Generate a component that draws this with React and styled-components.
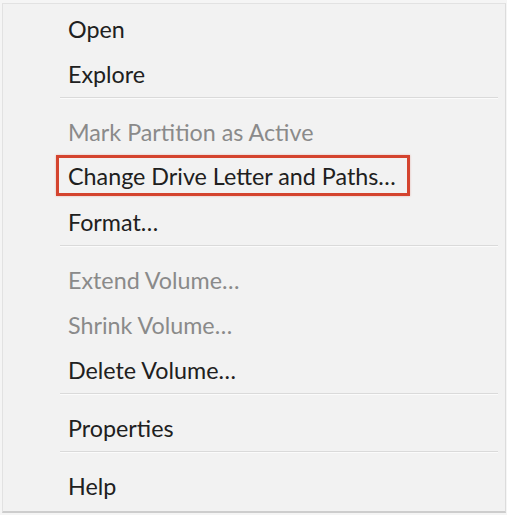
import React from "react";
import styled, { createGlobalStyle } from "styled-components";

const Global = createGlobalStyle`
  html, body { margin: 0; padding: 0; background: #f5f5f5; }
  body { font-family: Lato, "Open Sans", sans-serif; }
`;

const Menu = styled.div`
  box-sizing: border-box;
  width: 504px;
  height: 510px;
  margin: 3px 0 0 2px;
  padding: 2px 0 0 0;
  background: #f2f2f2;
  border: 1px solid #e2e2e2;
  border-bottom: 2px solid #cdcdcd;
  border-right: 1px solid #dcdcdc;
  display: flex;
  flex-direction: column;
`;

const Item = styled.div`
  height: 45px;
  flex: 0 0 45px;
  display: flex;
  align-items: center;
  padding-left: 65px;
  font-size: 23.3px;
  color: ${(p) => (p.$disabled ? "#8a8a8a" : "#202020")};
  white-space: nowrap;
`;

const Label = styled.span`
  display: inline-block;
  line-height: 28px;
  ${(p) =>
    p.$highlight &&
    `
    border: 3px solid #d4442f;
    box-shadow: 0 0 2px rgba(212,68,47,0.35);
    padding: 4px 11px 3px 9px;
    margin-left: -12px;
    margin-top: -3px;
  `}
`;

const Separator = styled.div`
  flex: 0 0 13px;
  box-sizing: border-box;
  padding-top: 1px;
  margin: 0 7px 0 57px;
  &::before {
    content: "";
    display: block;
    height: 1px;
    background: #dadada;
    border-bottom: 1px solid #fbfbfb;
  }
`;

const entries = [
  { label: "Open" },
  { label: "Explore" },
  { sep: true },
  { label: "Mark Partition as Active", disabled: true },
  { label: "Change Drive Letter and Paths…", highlight: true },
  { label: "Format…" },
  { sep: true },
  { label: "Extend Volume…", disabled: true },
  { label: "Shrink Volume…", disabled: true },
  { label: "Delete Volume…" },
  { sep: true },
  { label: "Properties" },
  { sep: true },
  { label: "Help" },
];

export default function App() {
  return (
    <>
      <Global />
      <Menu>
        {entries.map((e, i) =>
          e.sep ? (
            <Separator key={i} />
          ) : (
            <Item key={i} $disabled={e.disabled}>
              <Label $highlight={e.highlight}>{e.label}</Label>
            </Item>
          )
        )}
      </Menu>
    </>
  );
}
